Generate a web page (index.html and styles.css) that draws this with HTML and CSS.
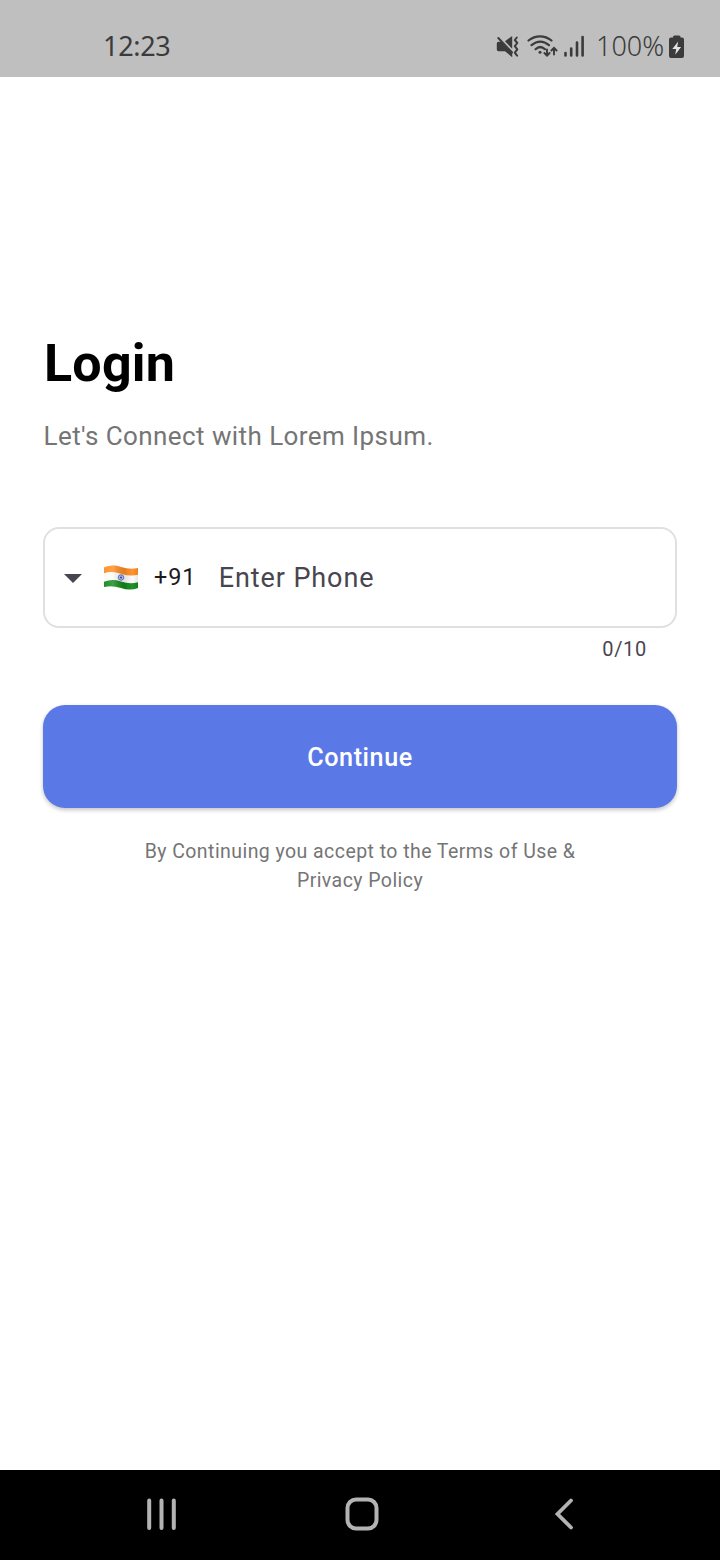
FILE: index.html
```html
<!DOCTYPE html>
<html lang="en">
<head>
<meta charset="utf-8">
<title>Login</title>
<link rel="stylesheet" href="styles.css">
</head>
<body>
<div class="screen">
  <header class="status">
    <span class="clock">12:23</span>
    <div class="indicators">
      <svg class="mute" width="24" height="24" viewBox="496 35 24 24">
        <path d="M496.800 43.500q0-1.700 1.700-1.700h2.700L512.200 53.500v3.700l-7.200-6h-6.500q-1.700 0-1.700-1.700z" fill="#3b3b3b"/>
        <path d="M505 41.300 512.200 36v12.800z" fill="#3b3b3b"/>
        <path d="M498.300 38 512 52.500" stroke="#3b3b3b" stroke-width="2" stroke-linecap="round"/>
        <path d="M516.800 37.500l-2 2.500 2.500 3-2.500 3.200 2.500 3.200-2.500 3.200 2.300 3" fill="none" stroke="#3b3b3b" stroke-width="2" stroke-linejoin="round" stroke-linecap="round"/>
      </svg>
      <svg class="wifi" width="32" height="24" viewBox="527 35 32 24">
        <g fill="none" stroke="#3b3b3b" stroke-width="2.200" stroke-linecap="round">
          <path d="M528.500 40.500c7-5.500 16-5.500 23 0"/>
          <path d="M531.500 45.200c5.500-4.600 12-4.600 17.500 0"/>
          <path d="M535.500 49.200c3-2.800 6.500-2.800 9.500 0"/>
          <path d="M547 49.500v6m-2.600-2.500 2.600 2.700 2.600-2.700M554 54.500v-6.500m-2.600 2.500 2.600-2.700 2.600 2.700" stroke-width="1.900"/>
        </g>
        <circle cx="540" cy="52.300" r="1.500" fill="#3b3b3b"/>
      </svg>
      <svg class="signal" width="22" height="24" viewBox="563 35 22 24">
        <path d="M565.500 53v2.500M571.200 48.500v7M577 42.500v13M582.600 37v18.500" stroke="#3b3b3b" stroke-width="2.600" stroke-linecap="round"/>
      </svg>
      <span class="percent">100%</span>
      <svg class="battery" width="16" height="24" viewBox="669 35 16 24">
        <path d="M673 37.500v-.5a1.500 1.500 0 0 1 1.500-1.500h4.500a1.500 1.500 0 0 1 1.500 1.500v.5h1.500a2 2 0 0 1 2 2V56a2 2 0 0 1-2 2h-11a2 2 0 0 1-2-2V39.500a2 2 0 0 1 2-2z" fill="#3b3b3b"/>
        <path d="M678.200 41.500 672.300 49h3.900l-1 5.800 5.900-7.800h-3.900z" fill="#e2e2e2"/>
      </svg>
    </div>
  </header>

  <main class="content">
    <h1 class="title">Login</h1>
    <p class="subtitle">Let's Connect with Lorem Ipsum.</p>
    <div class="field">
      <svg class="caret" width="18" height="9" viewBox="0 0 18 9"><path d="M0 0h18L9 9z" fill="#49454f"/></svg>
      <svg class="flag" width="36" height="28" viewBox="0 0 36 28">
        <defs>
          <clipPath id="cloth"><path d="M1 3.500Q9 0 18 3t17 1v20q-8 3-17 0T1 23z"/></clipPath>
          <linearGradient id="fold" x1="0" x2="1">
            <stop offset="0" stop-color="#fff" stop-opacity=".05"/>
            <stop offset=".28" stop-color="#fff" stop-opacity=".2"/>
            <stop offset=".6" stop-color="#000" stop-opacity=".1"/>
            <stop offset=".82" stop-color="#fff" stop-opacity=".08"/>
            <stop offset="1" stop-color="#000" stop-opacity=".1"/>
          </linearGradient>
        </defs>
        <g clip-path="url(#cloth)">
          <path d="M0 0h36v28H0z" fill="#fafafa"/>
          <path d="M0 0h36v10.500q-8 2.500-18-.8T0 9.500z" fill="#ff8b1f"/>
          <path d="M0 18q9-3.500 18-.5t18 .5v10H0z" fill="#118718"/>
          <path d="M0 0h36v28H0z" fill="url(#fold)"/>
        </g>
        <circle cx="18" cy="13.500" r="2.700" fill="#e4e7f8" stroke="#3843a5" stroke-width=".8"/>
        <path d="M18 10.900v5.200M15.400 13.500h5.200M16.200 11.700l3.600 3.600M19.800 11.700l-3.600 3.600" stroke="#3843a5" stroke-width=".4"/>
        <circle cx="18" cy="13.500" r=".9" fill="#3843a5"/>
      </svg>
      <span class="code">+91</span>
      <span class="placeholder">Enter Phone</span>
    </div>
    <div class="counter">0/10</div>
    <button class="continue">Continue</button>
    <p class="terms">By Continuing you accept to the Terms of Use &amp;<br>Privacy Policy</p>
  </main>

  <nav class="navbar">
    <svg class="recents" width="32" height="34" viewBox="0 0 32 34"><path d="M3.200 3.500v27.500M15.500 3.500v27.500M27.800 3.500v27.500" stroke="#b3b3b3" stroke-width="4" stroke-linecap="round"/></svg>
    <svg class="home" width="34" height="34" viewBox="0 0 34 34"><rect x="2.500" y="2.500" width="29" height="29" rx="8.500" fill="none" stroke="#b3b3b3" stroke-width="4"/></svg>
    <svg class="back" width="20" height="34" viewBox="0 0 20 34"><path d="M17 3.500 3.500 17 17 30.500" fill="none" stroke="#b3b3b3" stroke-width="3.800" stroke-linecap="round"/></svg>
  </nav>
</div>
</body>
</html>
```
FILE: styles.css
```css
* { box-sizing: border-box; }
body { margin: 0; background: #fff; font-family: Roboto, sans-serif; }
.screen { display: flex; flex-direction: column; width: 720px; height: 1560px; }

.status {
  display: flex; justify-content: space-between; align-items: flex-start;
  height: 77px; padding: 30px 35px 0 103px;
  background: #bfbfbf; color: #3b3b3b;
  font-family: "Noto Sans", sans-serif; font-size: 27px; line-height: 32px;
}
.clock { font-weight: 370; letter-spacing: -0.3px; }
.indicators { display: flex; align-items: flex-start; }
.indicators svg { margin-top: 5px; }
.wifi { margin-left: 7px; }
.signal { margin-left: 4px; }
.percent { width: 73px; margin-left: 11px; white-space: nowrap; font-weight: 350; letter-spacing: 0; }

.content { flex: 1; padding: 257px 43px 0; }
.title { margin: 0; padding-left: 1px; color: #000; font-size: 52px; line-height: 60px; font-weight: 700; letter-spacing: 0.2px; }
.subtitle { margin: 27px 0 0; padding-left: 0.500px; color: #757575; font-size: 26px; line-height: 30px; letter-spacing: 0.42px; }
.field {
  display: flex; align-items: center;
  height: 101px; margin-top: 76px; padding: 0 19px;
  border: 2px solid #e0e0e0; border-radius: 16px;
}
.caret { margin-top: 1px; }
.flag { margin-left: 21px; }
.code { margin: -2px 0 0 15px; color: #1c1b1f; font-size: 23.400px; line-height: 30px; letter-spacing: 0.9px; }
.placeholder { margin-left: 22.500px; color: #49454f; font-size: 27px; line-height: 32px; letter-spacing: 0.9px; }
.counter { margin-top: 8px; padding-right: 30px; text-align: right; color: #49454f; font-size: 20px; line-height: 26px; letter-spacing: 0.7px; }
.continue {
  display: block; width: 100%; height: 103px; margin-top: 43px; padding: 2px 0 0;
  border: 0; border-radius: 22px; background: #5b79e6; color: #fff;
  font: 500 25.200px/30px Roboto, sans-serif; letter-spacing: 0.55px;
  box-shadow: 0 2px 4px rgba(0, 0, 0, 0.24);
}
.terms { margin: 29px 0 0; text-align: center; color: #757575; font-size: 19.500px; line-height: 29px; letter-spacing: 0.44px; }

.navbar { display: flex; height: 90px; padding: 26.500px 145px 0 146px; background: #000; }
.home { margin-left: 167px; }
.back { margin-left: 174.500px; }
```
